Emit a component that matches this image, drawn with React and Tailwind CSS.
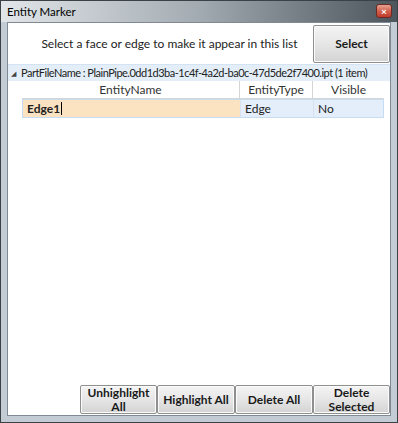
export default function App() {
  const font = { fontFamily: 'Lato, "Open Sans", sans-serif' };
  const btn =
    "flex items-center justify-center text-center font-bold text-[12px] leading-[14px] text-[#1a1a1a] border border-[#8e8f8f] rounded-[2px] bg-gradient-to-b from-[#f4f4f4] via-[#e6e6e6] to-[#d3d3d3] shadow-[inset_0_0_0_1px_#fbfbfb]";
  return (
    <div className="w-[398px] h-[423px] flex flex-col bg-[#c3ccd5] border border-[#3c4146]" style={font}>
      <div className="h-[21px] flex items-center relative bg-gradient-to-r from-[#e2e6e9] via-[#a3abb2] to-[#4d555d]">
        <span className="pl-[6px] text-[11.5px] text-black">Entity Marker</span>
        <div className="absolute right-[5px] top-[3px] w-[16px] h-[14px] rounded-[3px] border border-[#6e2a22] bg-gradient-to-b from-[#e9a393] via-[#d0614e] to-[#c0392b] flex items-center justify-center text-white text-[10px] font-bold leading-none">
          ×
        </div>
      </div>
      <div className="flex-1 mx-[6px] bg-white border border-[#7f8a95] flex flex-col">
        <div className="flex h-[40px] pt-[1px]">
          <div className="flex-1 flex items-center justify-center text-[12px] text-[#222] pl-[18px] whitespace-nowrap">
            Select a face or edge to make it appear in this list
          </div>
          <div className={btn + " w-[77px] h-[38px] text-[12.5px] mt-[1px]"}>Select</div>
        </div>
        <div className="mt-[1px] h-[17px] flex items-center bg-[#e4eef8] border-t border-[#d3e3f3] text-[11px] tracking-[-0.5px] text-[#222] whitespace-nowrap overflow-hidden">
          <span className="pl-[3px] pr-[5px] text-[7px] text-[#444] tracking-normal">◢</span>
          PartFileName : PlainPipe.0dd1d3ba-1c4f-4a2d-ba0c-47d5de2f7400.ipt (1 item)
        </div>
        <div className="flex pl-[14px] pr-[6px] text-[12px] text-[#333]">
          <div className="flex w-full h-[18px] border-b border-[#d5d5d5]">
            <div className="w-[218px] flex items-center justify-center border-r border-[#d5d5d5]">EntityName</div>
            <div className="w-[73px] flex items-center justify-center border-r border-[#d5d5d5]">EntityType</div>
            <div className="flex-1 flex items-center justify-center">Visible</div>
          </div>
        </div>
        <div className="flex pl-[14px] pr-[6px] text-[12px] text-[#222]">
          <div className="flex w-full h-[19px] bg-[#e3eefa] border border-[#c6dcf2]">
            <div className="w-[217px] flex items-center pl-[4px] bg-[#fbe3c1] font-bold">
              Edge1<span className="inline-block w-px h-[13px] bg-black ml-[1px]" />
            </div>
            <div className="w-[73px] flex items-center pl-[4px] border-l border-[#d6e2ee]">Edge</div>
            <div className="flex-1 flex items-center pl-[4px] border-l border-[#d6e2ee]">No</div>
          </div>
        </div>
        <div className="flex-1" />
        <div className="flex justify-end mb-[1px]">
          <div className={btn + " w-[77px] h-[29px]"}>Unhighlight<br />All</div>
          <div className={btn + " w-[78px] h-[29px]"}>Highlight All</div>
          <div className={btn + " w-[78px] h-[29px]"}>Delete All</div>
          <div className={btn + " w-[77px] h-[29px]"}>Delete<br />Selected</div>
        </div>
      </div>
      <div className="h-[6px]" />
    </div>
  );
}
